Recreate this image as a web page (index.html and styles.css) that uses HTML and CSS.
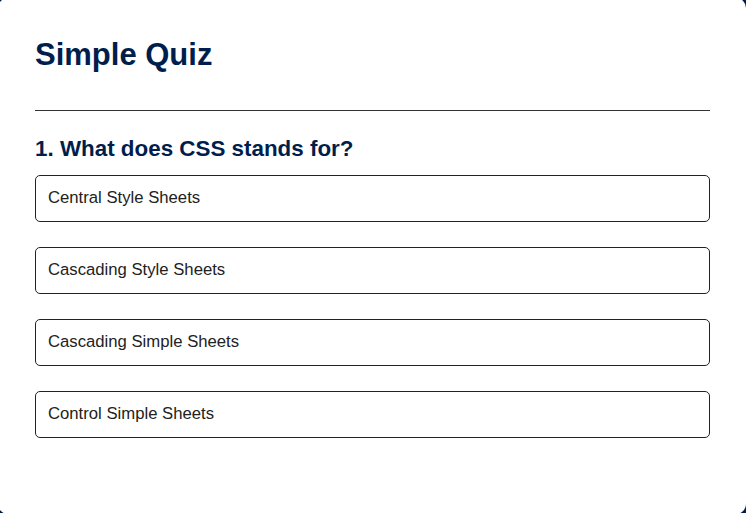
FILE: index.html
```html
<!DOCTYPE html>
<html lang="en">
<head>
<meta charset="utf-8">
<title>Simple Quiz</title>
<link rel="stylesheet" href="styles.css">
</head>
<body>
<div class="app">
  <h1 class="title">Simple Quiz</h1>
  <div class="quiz">
    <h2 class="question">1. What does CSS stands for?</h2>
    <div class="answers">
      <button class="btn">Central Style Sheets</button>
      <button class="btn">Cascading Style Sheets</button>
      <button class="btn">Cascading Simple Sheets</button>
      <button class="btn">Control Simple Sheets</button>
    </div>
  </div>
</div>
</body>
</html>
```

FILE: styles.css
```css
* {
  box-sizing: border-box;
}

html, body {
  margin: 0;
  padding: 0;
}

body {
  background: #001e4d;
  font-family: "Liberation Sans", Arial, sans-serif;
  overflow: hidden;
  height: 513px;
}

.app {
  background: #fff;
  width: 748px;
  height: 516px;
  margin: -2px 0 0 -2px;
  border-radius: 10px;
  padding: 39px 36px 0 37px;
}

.title {
  margin: 0;
  font-size: 31px;
  line-height: 36px;
  font-weight: 700;
  color: #001e4d;
  padding-bottom: 37px;
  border-bottom: 1px solid #333;
}

.question {
  margin: 25px 0 0;
  font-size: 22.4px;
  line-height: 26px;
  font-weight: 700;
  color: #001e4d;
}

.answers {
  display: flex;
  flex-direction: column;
  gap: 25px;
  margin-top: 13px;
}

.btn {
  display: block;
  width: 100%;
  background: #fff;
  color: #222;
  font-family: "Liberation Sans", Arial, sans-serif;
  font-size: 16.7px;
  line-height: 20px;
  font-weight: 500;
  text-align: left;
  padding: 12px 12px 13px;
  border: 1px solid #222;
  border-radius: 5px;
  cursor: pointer;
}
```
